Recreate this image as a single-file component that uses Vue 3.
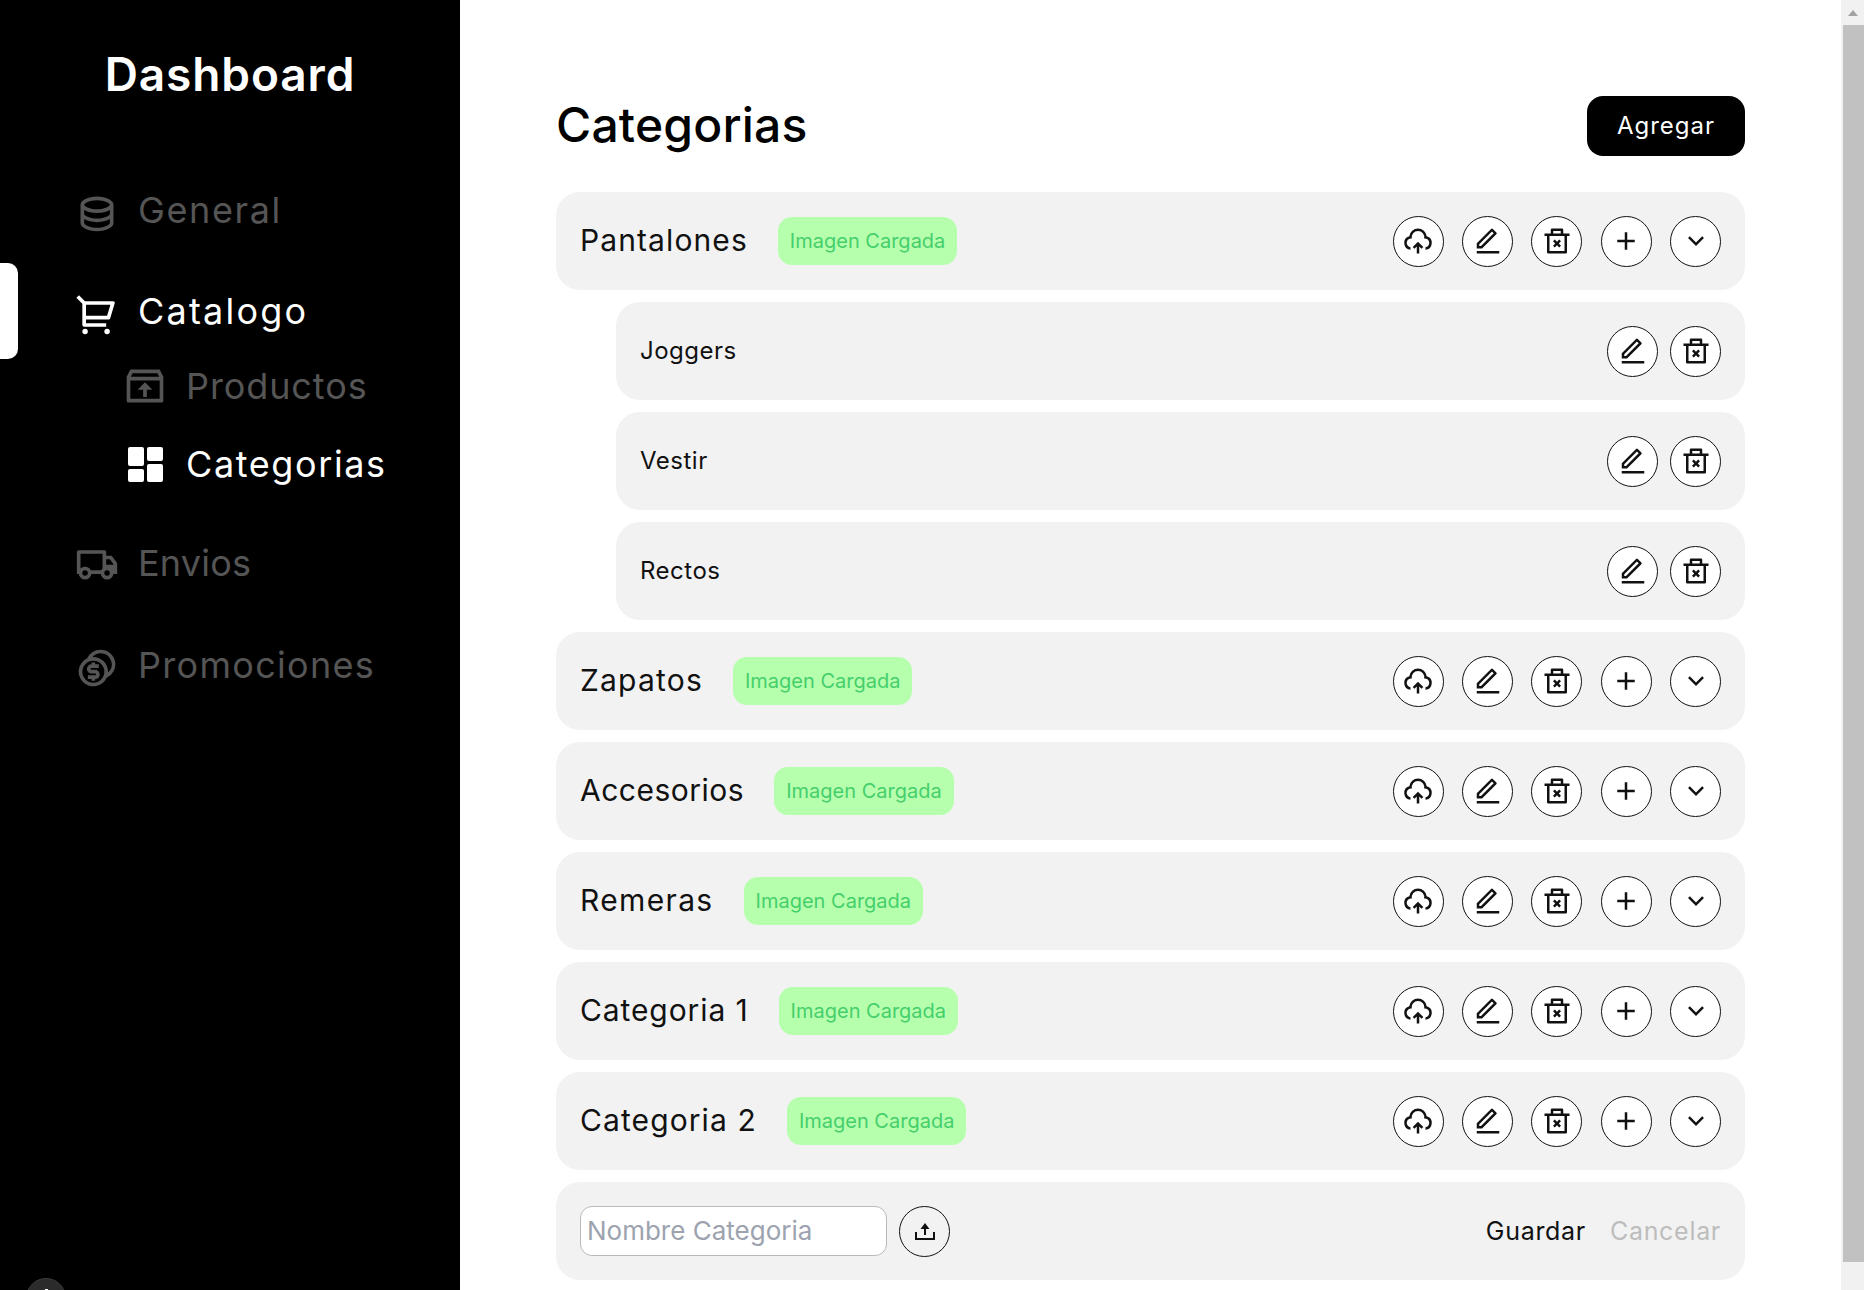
<script setup>
// ls: ajuste de tracking de cada nombre
const categorias = [
  { nombre: "Pantalones", ls: 1.1, hijos: ["Joggers", "Vestir", "Rectos"] },
  { nombre: "Zapatos", ls: 1.2, hijos: [] },
  { nombre: "Accesorios", ls: 0.5, hijos: [] },
  { nombre: "Remeras", ls: 1.35, hijos: [] },
  { nombre: "Categoria 1", ls: 0.9, hijos: [] },
  { nombre: "Categoria 2", ls: 1.1, hijos: [] },
];
</script>

<template>
  <svg class="defs" aria-hidden="true">
    <symbol id="i-db" viewBox="0 0 24 24"><path d="M5 12.5c0 .313.461.858 1.53 1.393C7.914 14.585 9.877 15 12 15c2.123 0 4.086-.415 5.47-1.107 1.069-.535 1.53-1.08 1.53-1.393v-2.171C17.35 11.349 14.827 12 12 12s-5.35-.652-7-1.671V12.5zm14 2.829C17.35 16.349 14.827 17 12 17s-5.35-.652-7-1.671V17.5c0 .313.461.858 1.53 1.393C7.914 19.585 9.877 20 12 20c2.123 0 4.086-.415 5.47-1.107 1.069-.535 1.53-1.08 1.53-1.393v-2.171zM3 17.5v-10C3 5.015 7.03 3 12 3s9 2.015 9 4.5v10c0 2.485-4.03 4.5-9 4.5s-9-2.015-9-4.5zm9-7.5c2.123 0 4.086-.415 5.47-1.107C18.539 8.358 19 7.813 19 7.5c0-.313-.461-.858-1.53-1.393C16.086 5.415 14.123 5 12 5c-2.123 0-4.086.415-5.47 1.107C5.461 6.642 5 7.187 5 7.5c0 .313.461.858 1.53 1.393C7.914 9.585 9.877 10 12 10z"/></symbol>
    <symbol id="i-cart" viewBox="0 0 24 24"><path d="M4 6.414L.757 3.172l1.415-1.415L5.414 5h15.242a1 1 0 0 1 .958 1.287l-2.4 8a1 1 0 0 1-.958.713H6v2h11v2H5a1 1 0 0 1-1-1V6.414zM6 7v6h11.512l1.8-6H6zm-.5 16a1.5 1.5 0 1 1 0-3 1.5 1.5 0 0 1 0 3zm12 0a1.5 1.5 0 1 1 0-3 1.5 1.5 0 0 1 0 3z"/></symbol>
    <symbol id="i-box" viewBox="0 0 24 24"><path d="M20 3l2 4v13a1 1 0 0 1-1 1H3a1 1 0 0 1-1-1V7.004L4 3h16zm0 6H4v10h16V9zm-8 1l4 4h-3v4h-2v-4H8l4-4zm6.764-5H5.236l-.999 2h15.527l-1-2z"/></symbol>
    <symbol id="i-grid" viewBox="0 0 35 35"><rect x="0" y="0" width="16" height="19" rx="2"/><rect x="19" y="0" width="16" height="14" rx="2"/><rect x="0" y="22" width="16" height="13" rx="2"/><rect x="19" y="17" width="16" height="18" rx="2"/></symbol>
    <symbol id="i-truck" viewBox="0 0 24 24"><path d="M8.965 18a3.5 3.5 0 0 1-6.93 0H1V6a1 1 0 0 1 1-1h14a1 1 0 0 1 1 1v2h3l3 4.056V18h-2.035a3.5 3.5 0 0 1-6.93 0h-5.07zM15 7H3v8.05a3.5 3.5 0 0 1 5.663.95h5.674c.168-.353.393-.674.663-.95V7zm2 6h4v-.285L18.992 10H17v3zm.5 6a1.5 1.5 0 1 0 0-3.001 1.5 1.5 0 0 0 0 3.001zM7 17.5a1.5 1.5 0 1 0-3 0 1.5 1.5 0 0 0 3 0z"/></symbol>
    <symbol id="i-coins" viewBox="0 0 24 24"><path d="M14 2a8 8 0 0 1 3.292 15.293A8 8 0 1 1 6.706 6.707 8.003 8.003 0 0 1 14 2zm-4 6a6 6 0 1 0 0 12 6 6 0 0 0 0-12zm1 1v1h2v2H9a.5.5 0 0 0-.09.992L9 13h2a2.5 2.5 0 0 1 0 5v1H9v-1H7v-2h4a.5.5 0 0 0 .09-.992L11 15H9a2.5 2.5 0 0 1 0-5V9h2zm3-5a5.985 5.985 0 0 0-4.484 2.013 8 8 0 0 1 8.471 8.471A6 6 0 0 0 14 4z"/></symbol>
    <symbol id="i-cloud" viewBox="0 0 24 24"><path d="M12 12.586l4.243 4.242-1.415 1.415L13 16.415V22h-2v-5.587l-1.828 1.83-1.415-1.415L12 12.586zM12 2a7.001 7.001 0 0 1 6.954 6.194 5.5 5.5 0 0 1-.953 10.784v-2.014a3.5 3.5 0 1 0-1.112-6.91 5 5 0 1 0-9.777 0 3.5 3.5 0 0 0-1.292 6.88l.18.03v2.014a5.5 5.5 0 0 1-.954-10.784A7 7 0 0 1 12 2z"/></symbol>
    <symbol id="i-edit" viewBox="0 0 24 24"><path d="M6.414 16L16.556 5.858l-1.414-1.414L5 14.586V16h1.414zm.829 2H3v-4.243L14.435 2.322a1 1 0 0 1 1.414 0l2.829 2.829a1 1 0 0 1 0 1.414L7.243 18zM3 20h18v2H3v-2z"/></symbol>
    <symbol id="i-trash" viewBox="0 0 24 24"><path d="M17 6h5v2h-2v13a1 1 0 0 1-1 1H5a1 1 0 0 1-1-1V8H2V6h5V3a1 1 0 0 1 1-1h8a1 1 0 0 1 1 1v3zm1 2H6v12h12V8zm-4.586 6l1.768 1.768-1.414 1.414L12 15.414l-1.768 1.768-1.414-1.414L10.586 14l-1.768-1.768 1.414-1.414L12 12.586l1.768-1.768 1.414 1.414L13.414 14zM9 4v2h6V4H9z"/></symbol>
    <symbol id="i-plus" viewBox="0 0 24 24"><path d="M11 11V5h2v6h6v2h-6v6h-2v-6H5v-2h6z"/></symbol>
    <symbol id="i-down" viewBox="0 0 24 24"><path d="M12 13.172l4.95-4.95 1.414 1.414L12 16 5.636 9.636 7.05 8.222z"/></symbol>
    <symbol id="i-upload" viewBox="0 0 24 24"><path d="M4 19h16v-6h2v8H2v-8h2v6zM13 10v6h-2v-6H7.5L12 4l4.5 6H13z"/></symbol>
  </svg>

  <div class="page">
    <aside class="sidebar">
      <h1 class="logo">Dashboard</h1>
      <nav class="nav">
        <a class="item general">
          <svg class="nav-icon bajo"><use href="#i-db" /></svg>General
        </a>
        <div class="grupo">
          <span class="marcador"></span>
          <a class="item activo catalogo">
            <svg class="nav-icon bajo"><use href="#i-cart" /></svg>Catalogo
          </a>
          <a class="item sub productos">
            <svg class="nav-icon"><use href="#i-box" /></svg>Productos
          </a>
          <a class="item sub activo categorias">
            <span class="grid-box"><svg class="grid-icon"><use href="#i-grid" /></svg></span>Categorias
          </a>
        </div>
        <a class="item envios">
          <svg class="nav-icon"><use href="#i-truck" /></svg>Envios
        </a>
        <a class="item promos">
          <svg class="nav-icon bajo"><use href="#i-coins" /></svg>Promociones
        </a>
      </nav>
      <span class="dev-badge"><i></i></span>
    </aside>

    <main class="main">
      <header class="head">
        <h2>Categorias</h2>
        <button class="agregar">Agregar</button>
      </header>

      <div class="lista">
        <template v-for="cat in categorias" :key="cat.nombre">
          <div class="fila">
            <span class="nombre" :style="{ letterSpacing: cat.ls + 'px' }">{{ cat.nombre }}</span>
            <span class="badge">Imagen Cargada</span>
            <div class="acciones">
              <button class="circulo"><svg class="icono"><use href="#i-cloud" /></svg></button>
              <button class="circulo"><svg class="icono"><use href="#i-edit" /></svg></button>
              <button class="circulo"><svg class="icono"><use href="#i-trash" /></svg></button>
              <button class="circulo"><svg class="icono"><use href="#i-plus" /></svg></button>
              <button class="circulo"><svg class="icono"><use href="#i-down" /></svg></button>
            </div>
          </div>
          <div v-for="hijo in cat.hijos" :key="hijo" class="fila hijo">
            <span class="nombre-hijo">{{ hijo }}</span>
            <div class="acciones cortas">
              <button class="circulo"><svg class="icono"><use href="#i-edit" /></svg></button>
              <button class="circulo"><svg class="icono"><use href="#i-trash" /></svg></button>
            </div>
          </div>
        </template>

        <div class="fila nueva">
          <input class="campo" type="text" placeholder="Nombre Categoria" />
          <button class="circulo subir"><svg class="icono chico"><use href="#i-upload" /></svg></button>
          <div class="botones">
            <button class="texto">Guardar</button>
            <button class="texto gris">Cancelar</button>
          </div>
        </div>
      </div>
    </main>

    <div class="scrollbar">
      <span class="flecha"></span>
      <span class="thumb"></span>
    </div>
  </div>
</template>

<style>
html,
body {
  margin: 0;
  overflow: hidden;
}
</style>

<style scoped>
.defs {
  display: none;
}

.page {
  display: flex;
  height: 1290px;
  overflow: hidden;
  font-family: Inter, "Noto Sans", sans-serif;
  background: #fff;
  color: #111;
}

.sidebar {
  position: relative;
  flex: 0 0 460px;
  background: #000;
  color: #555;
}

.logo {
  margin: 47px 0 0;
  height: 54px;
  line-height: 54px;
  text-align: center;
  color: #fff;
  font-size: 46px;
  font-weight: 600;
  letter-spacing: 0.9px;
}

.nav {
  margin-top: 82px;
  padding-left: 75px;
}

.item {
  display: flex;
  align-items: center;
  gap: 19px;
  height: 54px;
  font-size: 36px;
}

.general {
  letter-spacing: 1.6px;
}

.catalogo {
  letter-spacing: 2.2px;
}

.activo {
  color: #fff;
}

.grupo {
  position: relative;
  margin-top: 47px;
}

.marcador {
  position: absolute;
  left: -75px;
  top: -21px;
  width: 18px;
  height: 96px;
  background: #fff;
  border-radius: 0 10px 10px 0;
}

.sub {
  padding-left: 48px;
}

.productos {
  margin-top: 21px;
  letter-spacing: 0.9px;
}

.categorias {
  margin-top: 24px;
  letter-spacing: 1.6px;
}

.envios {
  margin-top: 45px;
  letter-spacing: 0.2px;
}

.promos {
  margin-top: 48px;
  letter-spacing: 1.3px;
}

.nav-icon {
  width: 44px;
  height: 44px;
  flex: none;
  fill: currentColor;
}

.bajo {
  margin-top: 5px;
}

.grid-box {
  display: flex;
  align-items: center;
  justify-content: center;
  width: 44px;
  height: 44px;
}

.grid-icon {
  width: 35px;
  height: 35px;
  fill: currentColor;
}

.dev-badge {
  position: absolute;
  left: 26px;
  top: 1278px;
  width: 40px;
  height: 40px;
  box-sizing: border-box;
  display: flex;
  justify-content: center;
  padding-top: 10px;
  border: 1px solid #3c3c3c;
  border-radius: 50%;
  background: #2b2b2b;
}

.dev-badge i {
  width: 3px;
  height: 3px;
  background: #fff;
}

.main {
  flex: 1;
  padding: 96px 96px 0;
}

.head {
  display: flex;
  align-items: center;
  justify-content: space-between;
  height: 60px;
  margin-bottom: 36px;
}

.head h2 {
  margin: 0 0 4px;
  font-size: 48px;
  font-weight: 500;
  color: #000;
  letter-spacing: 0.2px;
}

.agregar {
  width: 158px;
  height: 60px;
  padding: 0 0 2px;
  border: 0;
  border-radius: 16px;
  background: #000;
  color: #fff;
  font: 400 24px Inter, sans-serif;
  letter-spacing: 1px;
}

.lista {
  display: flex;
  flex-direction: column;
  gap: 12px;
}

.fila {
  display: flex;
  align-items: center;
  height: 98px;
  padding: 0 24px;
  box-sizing: border-box;
  background: #f2f2f2;
  border-radius: 24px;
}

.hijo {
  margin-left: 60px;
}

.nombre {
  padding-bottom: 2px;
  font-size: 30px;
  color: #111;
}

.nombre-hijo {
  padding-bottom: 2px;
  font-size: 24px;
  letter-spacing: 0.5px;
  color: #111;
}

.badge {
  display: flex;
  align-items: center;
  height: 48px;
  margin-left: 30px;
  padding: 0 12px;
  border-radius: 14px;
  background: #b6ffad;
  color: #45cf6c;
  font-size: 20px;
}

.acciones {
  display: flex;
  gap: 18.3px;
  margin-left: auto;
}

.cortas {
  gap: 12px;
}

.circulo {
  display: flex;
  align-items: center;
  justify-content: center;
  width: 51px;
  height: 51px;
  padding: 0;
  border: 1px solid #111;
  border-radius: 50%;
  background: #fff;
}

.icono {
  width: 30px;
  height: 30px;
  fill: #111;
}

.chico {
  width: 24px;
  height: 24px;
}

.campo {
  width: 307px;
  height: 50px;
  padding: 0 0 2px 6px;
  box-sizing: border-box;
  border: 1px solid #b9b9b9;
  border-radius: 12px;
  background: #fff;
  font: 400 26px Inter, sans-serif;
  outline: none;
}

.campo::placeholder {
  color: #9ca3af;
}

.subir {
  margin-left: 12px;
  background: none;
}

.botones {
  display: flex;
  gap: 24px;
  margin-left: auto;
}

.texto {
  padding: 0;
  border: 0;
  background: none;
  color: #111;
  font: 400 25px Inter, sans-serif;
  letter-spacing: 0.7px;
}

.gris {
  color: #bdbdbd;
}

.scrollbar {
  display: flex;
  flex-direction: column;
  flex: 0 0 23px;
  box-sizing: border-box;
  padding-left: 2px;
  background: #f1f1f1;
}

.flecha {
  display: block;
  width: 0;
  height: 0;
  margin: 10px 0 0 5px;
  border-left: 5.5px solid transparent;
  border-right: 5.5px solid transparent;
  border-bottom: 6px solid #a3a3a3;
}

.thumb {
  height: 1237px;
  margin-top: 9px;
  background: #c1c1c1;
}
</style>
